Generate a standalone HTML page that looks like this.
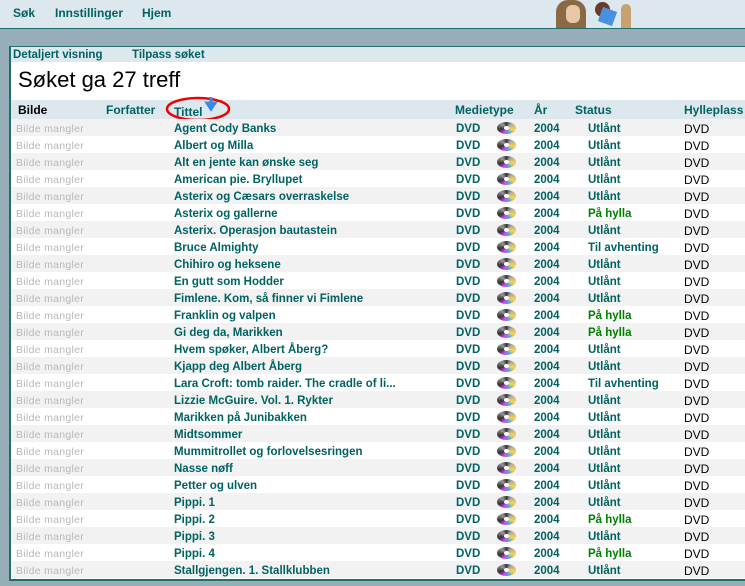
<!DOCTYPE html>
<html><head><meta charset="utf-8"><style>
*{margin:0;padding:0;box-sizing:border-box}
body{width:745px;height:586px;overflow:hidden;background:#97aeb9;font-family:"Liberation Sans",Arial,sans-serif;position:relative}
.top{position:absolute;left:0;top:0;width:745px;height:29px;background:#dde7ee;border-bottom:1px solid #1f6f6f}
.top span{position:absolute;top:6px;font-weight:bold;font-size:12px;color:#006262}
.panel{position:absolute;left:9px;top:46px;width:740px;height:535px;background:#fff;border-left:2px solid #1f6f6f;border-bottom:2px solid #1f6f6f;border-top:1px solid #1f6f6f}
.tb{position:absolute;left:0;top:0;width:740px;height:15px;background:#dde7ee}
.tb span{position:absolute;top:1px;line-height:15px;font-weight:bold;font-size:11.5px;color:#006262}
h1{position:absolute;left:7px;top:20px;font-weight:normal;font-size:22px;color:#000}
.hdr{position:absolute;left:0;top:53px;width:740px;height:19px;background:#dde7ee}
.hdr span{position:absolute;top:3px;font-weight:bold;font-size:12px;color:#006262}
.rows{position:absolute;left:0;top:72px;width:740px}
.row{position:relative;width:740px;height:17px;font-size:11.5px}
.row:nth-child(odd){background:#f2f2f2}
.row span{position:absolute;top:2px;line-height:17px;font-weight:bold;color:#006262}
.row .b{left:5px;font-weight:normal;color:#b8b8b8;font-size:10.5px;letter-spacing:0.3px}
.row .t{left:163px}.row .m{left:445px}.row .y{left:523px}.row .s{left:577px}.row .p{color:#008000}
.row .h{left:673px;font-weight:normal;color:#000;font-size:12px}
.cd{position:absolute;left:486px;top:3px;width:19px;height:12px;border-radius:50%;background:conic-gradient(#333,#aaa,#ffd24a,#4ad,#d4f,#333,#999,#333)}
.cd:after{content:"";position:absolute;left:7px;top:4px;width:5px;height:4px;border-radius:50%;background:#fff}
</style></head><body>
<div class="top"><span style="left:13px">Søk</span><span style="left:55px">Innstillinger</span><span style="left:142px">Hjem</span>
<div style="position:absolute;left:556px;top:0;width:30px;height:28px;background:#8a6a45;border-radius:12px 12px 0 0"></div>
<div style="position:absolute;left:566px;top:5px;width:14px;height:18px;background:#e8c8a8;border-radius:6px"></div>
<div style="position:absolute;left:595px;top:2px;width:15px;height:15px;background:#6a3b2a;border-radius:50%"></div>
<div style="position:absolute;left:600px;top:9px;width:15px;height:15px;background:#4a90e0;transform:rotate(20deg)"></div>
<div style="position:absolute;left:621px;top:4px;width:10px;height:24px;background:#c9a070;border-radius:5px 5px 0 0"></div>
</div>
<div class="panel">
<div class="tb"><span style="left:2px">Detaljert visning</span><span style="left:121px">Tilpass søket</span></div>
<h1>Søket ga 27 treff</h1>
<div class="hdr"><span style="left:7px;color:#000">Bilde</span><span style="left:95px">Forfatter</span><span style="left:163px;top:5px">Tittel</span>
<svg style="position:absolute;left:154px;top:-5px" width="70" height="28"><ellipse cx="33" cy="14" rx="31" ry="11" fill="none" stroke="#e00" stroke-width="2.5"/><path d="M46 2v8M42 8l4 6 4-6z" stroke="#3a8ae8" stroke-width="3" fill="#3a8ae8"/></svg>
<span style="left:444px">Medietype</span><span style="left:523px">År</span><span style="left:564px">Status</span><span style="left:673px">Hylleplass</span></div>
<div class="rows">
<div class="row"><span class="b">Bilde mangler</span><span class="t">Agent Cody Banks</span><span class="m">DVD</span><i class="cd"></i><span class="y">2004</span><span class="s">Utlånt</span><span class="h">DVD</span></div>
<div class="row"><span class="b">Bilde mangler</span><span class="t">Albert og Milla</span><span class="m">DVD</span><i class="cd"></i><span class="y">2004</span><span class="s">Utlånt</span><span class="h">DVD</span></div>
<div class="row"><span class="b">Bilde mangler</span><span class="t">Alt en jente kan ønske seg</span><span class="m">DVD</span><i class="cd"></i><span class="y">2004</span><span class="s">Utlånt</span><span class="h">DVD</span></div>
<div class="row"><span class="b">Bilde mangler</span><span class="t">American pie. Bryllupet</span><span class="m">DVD</span><i class="cd"></i><span class="y">2004</span><span class="s">Utlånt</span><span class="h">DVD</span></div>
<div class="row"><span class="b">Bilde mangler</span><span class="t">Asterix og Cæsars overraskelse</span><span class="m">DVD</span><i class="cd"></i><span class="y">2004</span><span class="s">Utlånt</span><span class="h">DVD</span></div>
<div class="row"><span class="b">Bilde mangler</span><span class="t">Asterix og gallerne</span><span class="m">DVD</span><i class="cd"></i><span class="y">2004</span><span class="s p">På hylla</span><span class="h">DVD</span></div>
<div class="row"><span class="b">Bilde mangler</span><span class="t">Asterix. Operasjon bautastein</span><span class="m">DVD</span><i class="cd"></i><span class="y">2004</span><span class="s">Utlånt</span><span class="h">DVD</span></div>
<div class="row"><span class="b">Bilde mangler</span><span class="t">Bruce Almighty</span><span class="m">DVD</span><i class="cd"></i><span class="y">2004</span><span class="s">Til avhenting</span><span class="h">DVD</span></div>
<div class="row"><span class="b">Bilde mangler</span><span class="t">Chihiro og heksene</span><span class="m">DVD</span><i class="cd"></i><span class="y">2004</span><span class="s">Utlånt</span><span class="h">DVD</span></div>
<div class="row"><span class="b">Bilde mangler</span><span class="t">En gutt som Hodder</span><span class="m">DVD</span><i class="cd"></i><span class="y">2004</span><span class="s">Utlånt</span><span class="h">DVD</span></div>
<div class="row"><span class="b">Bilde mangler</span><span class="t">Fimlene. Kom, så finner vi Fimlene</span><span class="m">DVD</span><i class="cd"></i><span class="y">2004</span><span class="s">Utlånt</span><span class="h">DVD</span></div>
<div class="row"><span class="b">Bilde mangler</span><span class="t">Franklin og valpen</span><span class="m">DVD</span><i class="cd"></i><span class="y">2004</span><span class="s p">På hylla</span><span class="h">DVD</span></div>
<div class="row"><span class="b">Bilde mangler</span><span class="t">Gi deg da, Marikken</span><span class="m">DVD</span><i class="cd"></i><span class="y">2004</span><span class="s p">På hylla</span><span class="h">DVD</span></div>
<div class="row"><span class="b">Bilde mangler</span><span class="t">Hvem spøker, Albert Åberg?</span><span class="m">DVD</span><i class="cd"></i><span class="y">2004</span><span class="s">Utlånt</span><span class="h">DVD</span></div>
<div class="row"><span class="b">Bilde mangler</span><span class="t">Kjapp deg Albert Åberg</span><span class="m">DVD</span><i class="cd"></i><span class="y">2004</span><span class="s">Utlånt</span><span class="h">DVD</span></div>
<div class="row"><span class="b">Bilde mangler</span><span class="t">Lara Croft: tomb raider. The cradle of li...</span><span class="m">DVD</span><i class="cd"></i><span class="y">2004</span><span class="s">Til avhenting</span><span class="h">DVD</span></div>
<div class="row"><span class="b">Bilde mangler</span><span class="t">Lizzie McGuire. Vol. 1. Rykter</span><span class="m">DVD</span><i class="cd"></i><span class="y">2004</span><span class="s">Utlånt</span><span class="h">DVD</span></div>
<div class="row"><span class="b">Bilde mangler</span><span class="t">Marikken på Junibakken</span><span class="m">DVD</span><i class="cd"></i><span class="y">2004</span><span class="s">Utlånt</span><span class="h">DVD</span></div>
<div class="row"><span class="b">Bilde mangler</span><span class="t">Midtsommer</span><span class="m">DVD</span><i class="cd"></i><span class="y">2004</span><span class="s">Utlånt</span><span class="h">DVD</span></div>
<div class="row"><span class="b">Bilde mangler</span><span class="t">Mummitrollet og forlovelsesringen</span><span class="m">DVD</span><i class="cd"></i><span class="y">2004</span><span class="s">Utlånt</span><span class="h">DVD</span></div>
<div class="row"><span class="b">Bilde mangler</span><span class="t">Nasse nøff</span><span class="m">DVD</span><i class="cd"></i><span class="y">2004</span><span class="s">Utlånt</span><span class="h">DVD</span></div>
<div class="row"><span class="b">Bilde mangler</span><span class="t">Petter og ulven</span><span class="m">DVD</span><i class="cd"></i><span class="y">2004</span><span class="s">Utlånt</span><span class="h">DVD</span></div>
<div class="row"><span class="b">Bilde mangler</span><span class="t">Pippi. 1</span><span class="m">DVD</span><i class="cd"></i><span class="y">2004</span><span class="s">Utlånt</span><span class="h">DVD</span></div>
<div class="row"><span class="b">Bilde mangler</span><span class="t">Pippi. 2</span><span class="m">DVD</span><i class="cd"></i><span class="y">2004</span><span class="s p">På hylla</span><span class="h">DVD</span></div>
<div class="row"><span class="b">Bilde mangler</span><span class="t">Pippi. 3</span><span class="m">DVD</span><i class="cd"></i><span class="y">2004</span><span class="s">Utlånt</span><span class="h">DVD</span></div>
<div class="row"><span class="b">Bilde mangler</span><span class="t">Pippi. 4</span><span class="m">DVD</span><i class="cd"></i><span class="y">2004</span><span class="s p">På hylla</span><span class="h">DVD</span></div>
<div class="row"><span class="b">Bilde mangler</span><span class="t">Stallgjengen. 1. Stallklubben</span><span class="m">DVD</span><i class="cd"></i><span class="y">2004</span><span class="s">Utlånt</span><span class="h">DVD</span></div>
</div>
</div>
</body></html>
